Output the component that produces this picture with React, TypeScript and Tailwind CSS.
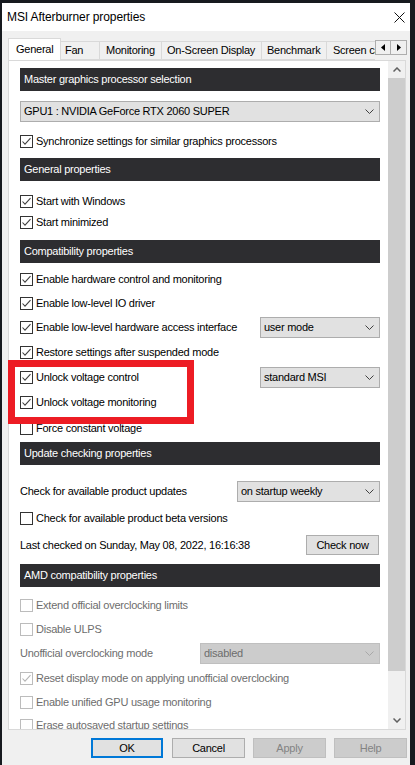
import React from "react";

type BoxProps = { checked?: boolean; disabled?: boolean };

function CheckBox({ checked, disabled }: BoxProps) {
  return (
    <span
      className={
        disabled
          ? "w-[13px] h-[13px] shrink-0 border border-[#bcbcbc] bg-white flex items-center justify-center"
          : "w-[13px] h-[13px] shrink-0 border border-[#333333] bg-white flex items-center justify-center"
      }
    >
      {checked && (
        <svg width="11" height="11" viewBox="0 0 11 11">
          <path
            d="M1.5 5.5 L4 8.2 L9.5 2.2"
            fill="none"
            stroke={disabled ? "#b5b5b5" : "#404040"}
            strokeWidth="1.1"
          />
        </svg>
      )}
    </span>
  );
}

function CheckRow({
  label,
  checked,
  disabled,
  className,
  children,
}: BoxProps & { label: string; className: string; children?: React.ReactNode }) {
  return (
    <div className={className}>
      <CheckBox checked={checked} disabled={disabled} />
      <span className={disabled ? "ml-[3px] flex-1 text-[#6d6d6d]" : "ml-[3px] flex-1"}>{label}</span>
      {children}
    </div>
  );
}

function Chevron({ color }: { color: string }) {
  return (
    <svg width="9" height="5" viewBox="0 0 9 5" className="shrink-0">
      <path d="M0.5 0.5 L4.5 4.5 L8.5 0.5" fill="none" stroke={color} strokeWidth="1" />
    </svg>
  );
}

function Select({ label, width, disabled }: { label: string; width: string; disabled?: boolean }) {
  return (
    <div
      className={
        disabled
          ? `${width} h-[21px] shrink-0 border border-[#bfbfbf] bg-[#cccccc] text-[#6d6d6d] flex items-center pl-[3px] pr-[5px]`
          : `${width} h-[21px] shrink-0 border border-[#adadad] bg-[#e1e1e1] text-black flex items-center pl-[3px] pr-[5px]`
      }
    >
      <span className="flex-1">{label}</span>
      <Chevron color={disabled ? "#a8a8a8" : "#404040"} />
    </div>
  );
}

function Header({ title, className }: { title: string; className: string }) {
  return (
    <div className={`${className} h-[23px] bg-[#2d2d30] text-white flex items-center pl-[4px]`}>{title}</div>
  );
}

export default function App() {
  return (
    <div className="w-[415px] h-[765px] overflow-hidden bg-[#171a1f] pl-[2px] pt-[3px] text-[11px] tracking-[-0.25px] text-black [font-family:'Liberation_Sans',Arial,sans-serif]">
      <div className="w-[408px] h-[762px] bg-[#f0f0f0] flex flex-col">
        {/* Title bar */}
        <div className="h-[28px] shrink-0 bg-white flex items-center pl-[5px] pr-[5px] text-[12px] tracking-[-0.1px]">
          <span className="flex-1">MSI Afterburner properties</span>
          <svg width="11" height="11" viewBox="0 0 11 11">
            <path d="M0.5 0.5 L10.5 10.5 M10.5 0.5 L0.5 10.5" stroke="#111" strokeWidth="1" />
          </svg>
        </div>

        {/* Tab strip */}
        <div className="mt-[7px] h-[22px] shrink-0 flex items-end pl-[6px]">
          <div className="w-[367px] h-[22px] flex items-end overflow-hidden">
            <div className="relative z-10 -mb-px w-[53px] h-[23px] shrink-0 bg-white border border-b-0 border-[#d9d9d9] flex items-center pl-[7px] pb-[2px]">
              General
            </div>
            <div className="w-[39px] h-[19px] shrink-0 border border-l-0 border-[#d9d9d9] bg-[#f0f0f0] flex items-center pl-[4px]">
              Fan
            </div>
            <div className="w-[62px] h-[19px] shrink-0 border border-l-0 border-[#d9d9d9] bg-[#f0f0f0] flex items-center pl-[6px]">
              Monitoring
            </div>
            <div className="w-[100px] h-[19px] shrink-0 border border-l-0 border-[#d9d9d9] bg-[#f0f0f0] flex items-center pl-[5px]">
              On-Screen Display
            </div>
            <div className="w-[65px] h-[19px] shrink-0 border border-l-0 border-[#d9d9d9] bg-[#f0f0f0] flex items-center pl-[5px]">
              Benchmark
            </div>
            <div className="w-[80px] h-[19px] shrink-0 border border-l-0 border-[#d9d9d9] bg-[#f0f0f0] flex items-center pl-[6px] whitespace-nowrap">
              Screen capture
            </div>
          </div>
          <div className="self-start mt-[2px] flex">
            <div className="w-[16px] h-[15px] border border-[#adadad] bg-[#f0f0f0] flex items-center justify-center">
              <svg width="4" height="7" viewBox="0 0 4 7">
                <path d="M4 0 L0 3.5 L4 7 Z" fill="#000" />
              </svg>
            </div>
            <div className="w-[16px] h-[15px] border border-l-0 border-[#adadad] bg-[#f0f0f0] flex items-center justify-center">
              <svg width="4" height="7" viewBox="0 0 4 7">
                <path d="M0 0 L4 3.5 L0 7 Z" fill="#000" />
              </svg>
            </div>
          </div>
        </div>

        {/* Settings page */}
        <div className="ml-[6px] w-[398px] h-[670px] shrink-0 border border-[#d9d9d9] bg-white flex relative">
          <div className="flex-1 overflow-hidden pl-[11px] pr-[8px] flex flex-col">
            <Header title="Master graphics processor selection" className="mt-[7px] shrink-0" />
            <div className="mt-[10px] shrink-0">
              <Select label="GPU1 : NVIDIA GeForce RTX 2060 SUPER" width="w-[360px]" />
            </div>
            <CheckRow
              label="Synchronize settings for similar graphics processors"
              checked
              className="mt-[9px] h-[20px] shrink-0 flex items-center"
            />

            <Header title="General properties" className="mt-[7px] shrink-0" />
            <CheckRow label="Start with Windows" checked className="mt-[10px] h-[20px] shrink-0 flex items-center" />
            <CheckRow label="Start minimized" checked className="mt-[1px] h-[20px] shrink-0 flex items-center" />

            <Header title="Compatibility properties" className="mt-[8px] shrink-0" />
            <CheckRow
              label="Enable hardware control and monitoring"
              checked
              className="mt-[6px] h-[20px] shrink-0 flex items-center"
            />
            <CheckRow label="Enable low-level IO driver" checked className="mt-[4px] h-[20px] shrink-0 flex items-center" />
            <CheckRow
              label="Enable low-level hardware access interface"
              checked
              className="mt-[4px] h-[21px] shrink-0 flex items-center"
            >
              <Select label="user mode" width="w-[120px]" />
            </CheckRow>
            <CheckRow
              label="Restore settings after suspended mode"
              checked
              className="mt-[4px] h-[20px] shrink-0 flex items-center"
            />
            <CheckRow label="Unlock voltage control" checked className="mt-[5px] h-[21px] shrink-0 flex items-center">
              <Select label="standard MSI" width="w-[120px]" />
            </CheckRow>
            <CheckRow label="Unlock voltage monitoring" checked className="mt-[4px] h-[20px] shrink-0 flex items-center" />
            <CheckRow label="Force constant voltage" className="mt-[6px] h-[20px] shrink-0 flex items-center" />

            <Header title="Update checking properties" className="mt-[4px] shrink-0" />
            <div className="mt-[16px] h-[21px] shrink-0 flex items-center">
              <span className="flex-1">Check for available product updates</span>
              <Select label="on startup weekly" width="w-[143px]" />
            </div>
            <CheckRow
              label="Check for available product beta versions"
              className="mt-[6px] h-[20px] shrink-0 flex items-center"
            />
            <div className="mt-[7px] h-[20px] shrink-0 flex items-center">
              <span className="flex-1">Last checked on Sunday, May 08, 2022, 16:16:38</span>
              <button className="mr-[1px] w-[73px] h-[20px] border border-[#adadad] bg-[#e1e1e1] flex items-center justify-center">
                Check now
              </button>
            </div>

            <Header title="AMD compatibility properties" className="mt-[9px] shrink-0" />
            <CheckRow
              label="Extend official overclocking limits"
              disabled
              className="mt-[8px] h-[20px] shrink-0 flex items-center"
            />
            <CheckRow label="Disable ULPS" disabled className="mt-[4px] h-[20px] shrink-0 flex items-center" />
            <div className="mt-[4px] h-[21px] shrink-0 flex items-center">
              <span className="flex-1 text-[#6d6d6d]">Unofficial overclocking mode</span>
              <Select label="disabled" width="w-[180px]" disabled />
            </div>
            <CheckRow
              label="Reset display mode on applying unofficial overclocking"
              checked
              disabled
              className="mt-[4px] h-[20px] shrink-0 flex items-center"
            />
            <CheckRow
              label="Enable unified GPU usage monitoring"
              disabled
              className="mt-[4px] h-[20px] shrink-0 flex items-center"
            />
            <CheckRow
              label="Erase autosaved startup settings"
              disabled
              className="mt-[3px] h-[20px] shrink-0 flex items-center"
            />
          </div>

          {/* Vertical scrollbar */}
          <div className="w-[17px] shrink-0 bg-[#f0f0f0] flex flex-col">
            <div className="h-[17px] shrink-0 flex items-center justify-center">
              <svg width="8" height="5" viewBox="0 0 8 5">
                <path d="M0.5 4.5 L4 1 L7.5 4.5" fill="none" stroke="#606060" strokeWidth="1.5" />
              </svg>
            </div>
            <div className="h-[593px] shrink-0 bg-[#cdcdcd]" />
            <div className="flex-1" />
            <div className="h-[17px] shrink-0 flex items-center justify-center">
              <svg width="8" height="5" viewBox="0 0 8 5">
                <path d="M0.5 0.5 L4 4 L7.5 0.5" fill="none" stroke="#606060" strokeWidth="1.5" />
              </svg>
            </div>
          </div>

          {/* Highlight frame drawn over the voltage options */}
          <div className="absolute left-[-1px] top-[299px] w-[186px] h-[64px] border-[7px] border-[#ed1c24] pointer-events-none" />
        </div>

        {/* Dialog buttons */}
        <div className="mt-[8px] h-[20px] shrink-0 flex pl-[89px]">
          <button className="w-[72px] h-[20px] border-2 border-[#0078d7] bg-[#e1e1e1] flex items-center justify-center">
            OK
          </button>
          <button className="ml-[9px] w-[73px] h-[20px] border border-[#adadad] bg-[#e1e1e1] flex items-center justify-center">
            Cancel
          </button>
          <button className="ml-[8px] w-[73px] h-[20px] border border-[#bfbfbf] bg-[#cccccc] text-[#838383] flex items-center justify-center">
            Apply
          </button>
          <button className="ml-[8px] w-[73px] h-[20px] border border-[#bfbfbf] bg-[#cccccc] text-[#838383] flex items-center justify-center">
            Help
          </button>
        </div>
      </div>
    </div>
  );
}
